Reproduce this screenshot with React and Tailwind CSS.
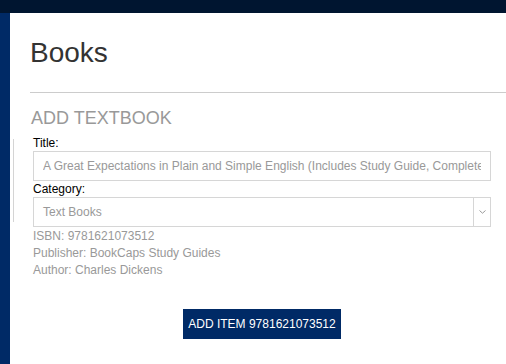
export default function App() {
  const font = { fontFamily: '"Liberation Sans", Arial, sans-serif' };
  return (
    <div className="w-[506px] h-[364px] overflow-hidden flex flex-col bg-[#002a66]" style={font}>
      <div className="h-[13px] shrink-0 bg-[#001530]" />
      <div className="flex-1 flex min-w-0">
        <div className="w-[10px] shrink-0 bg-[#002a66]" />
        <main className="flex-1 min-w-0 overflow-hidden bg-white pl-[20px]">
          <h1 className="mt-[22px] text-[28px] leading-[36px] text-[#333]">Books</h1>
          <hr className="mt-[21px] border-t border-[#ccc]" />
          <h2 className="mt-[15px] text-[18px] leading-[20px] text-[#999] pl-px">ADD TEXTBOOK</h2>
          <div className="pl-[3px] pr-[15px] mt-[7px]">
            <div className="relative">
              <div className="absolute left-[-20px] top-[4px] bottom-[5px] w-px bg-[#d4d4d4]" />
              <label className="block text-[12px] leading-[16px] text-black">Title:</label>
              <div className="h-[30px] min-w-0 border border-[#d6d6d6] flex items-center px-[9px] text-[12px] text-[#999] overflow-hidden">
                <span className="whitespace-nowrap overflow-hidden">
                  A Great Expectations in Plain and Simple English (Includes Study Guide, Complete Unabridged Book)
                </span>
              </div>
              <label className="block text-[12px] leading-[16px] text-black">Category:</label>
              <div className="h-[30px] border border-[#d6d6d6] flex text-[12px] text-[#999]">
                <div className="flex-1 flex items-center px-[9px]">Text Books</div>
                <div className="w-[17px] border-l border-[#d6d6d6] flex items-center justify-center">
                  <svg width="7" height="4" viewBox="0 0 7 4" fill="none">
                    <path d="M0.5 0.5 L3.5 3.2 L6.5 0.5" stroke="#999" strokeWidth="1" />
                  </svg>
                </div>
              </div>
            </div>
            <div className="mt-px text-[12px] leading-[17px] text-[#999]">
              <div>ISBN: 9781621073512</div>
              <div>Publisher: BookCaps Study Guides</div>
              <div>Author: Charles Dickens</div>
            </div>
            <div className="flex justify-center mt-[30px]">
              <button className="w-[158px] h-[30px] bg-[#002a66] text-white text-[12px]">
                ADD ITEM 9781621073512
              </button>
            </div>
          </div>
        </main>
      </div>
    </div>
  );
}
